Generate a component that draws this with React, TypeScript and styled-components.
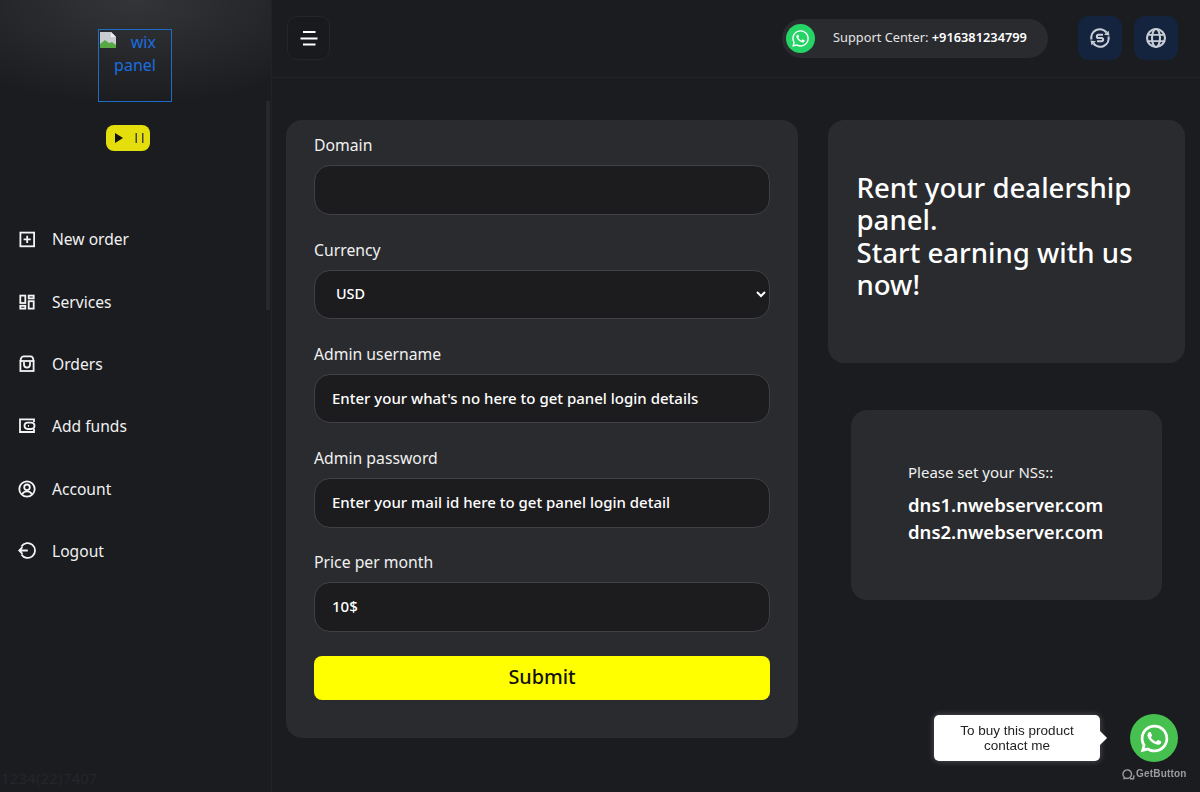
import React from "react";
import styled, { createGlobalStyle } from "styled-components";
import { RiWhatsappLine } from "react-icons/ri";
import { FaWhatsapp } from "react-icons/fa";

const Global = createGlobalStyle`
  html, body { margin: 0; padding: 0; height: 100%; background: #1a1c20; overflow: hidden; }
  * { box-sizing: border-box; }
  body { font-family: "Noto Sans", sans-serif; color: #fff; }
`;

const Page = styled.div`
  display: flex;
  width: 1200px;
  height: 792px;
  overflow: hidden;
  background: #1a1c20;
`;

const Sidebar = styled.aside`
  position: relative;
  width: 272px;
  flex: none;
  display: flex;
  flex-direction: column;
  align-items: stretch;
  border-right: 1px solid #202227;
  background:
    radial-gradient(ellipse 230px 105px at 135px 0, rgba(255,255,255,0.11), rgba(255,255,255,0) 100%),
    #1a1c20;
`;

const ScrollThumb = styled.div`
  position: absolute;
  right: 1px;
  top: 101px;
  width: 4px;
  height: 209px;
  background: #27292d;
`;

const LogoRow = styled.div`
  padding: 29px 0 0 98px;
`;

const LogoBox = styled.div`
  position: relative;
  width: 74px;
  height: 73px;
  border: 1px solid #1c6cc8;
  color: #1a6ee0;
  font-size: 16px;
  line-height: 23px;
  text-align: center;
  padding-top: 1px;
  svg { position: absolute; left: 1px; top: 2px; }
`;

const Toggle = styled.div`
  display: flex;
  align-items: center;
  justify-content: center;
  gap: 11px;
  width: 44px;
  height: 26px;
  margin: 23px 0 0 106px;
  padding-left: 2px;
  background: #e3de0c;
  border-radius: 8px;
`;

const Nav = styled.nav`
  display: flex;
  flex-direction: column;
  margin-top: 57px;
  padding-left: 18px;
`;

const NavItem = styled.a`
  display: flex;
  align-items: center;
  gap: 16px;
  height: 62.4px;
  font-size: 15.6px;
  color: #f1f1f1;
  svg { flex: none; }
`;

const NavIcon = styled.svg`
  width: 18px;
  height: 18px;
  fill: none;
  stroke: #f4f4f4;
  stroke-width: 1.8;
`;

const Ghost = styled.div`
  margin-top: auto;
  padding-bottom: 4px;
  margin-left: 1px;
  font-size: 15px;
  line-height: 19px;
  letter-spacing: 0.15px;
  color: #24262a;
  white-space: nowrap;
`;

const Main = styled.main`
  flex: 1;
  min-width: 0;
  display: flex;
  flex-direction: column;
`;

const Topbar = styled.header`
  height: 78px;
  flex: none;
  display: flex;
  align-items: center;
  padding: 0 22px 2px 15px;
  border-bottom: 1px solid #22242a;
`;

const MenuButton = styled.button`
  width: 43px;
  height: 44px;
  padding: 0;
  display: flex;
  align-items: center;
  justify-content: center;
  background: #191a1d;
  border: 1px solid #24262b;
  border-radius: 10px;
`;

const Support = styled.div`
  margin: 2px 18px 0 auto;
  display: flex;
  align-items: center;
  width: 266px;
  height: 39px;
  padding-left: 4px;
  background: #2a2b2f;
  border-radius: 20px;
  font-size: 12.8px;
  color: #e4e4e4;
  b { font-weight: 600; color: #fff; }
`;

const SupportText = styled.span`
  margin-bottom: 3px;
`;

const GreenDot = styled.span`
  width: 29px;
  height: 29px;
  margin-right: 18px;
  border-radius: 50%;
  background: #25d366;
  display: flex;
  align-items: center;
  justify-content: center;
`;

const SquareButton = styled.div`
  width: 44px;
  height: 44px;
  margin-left: 12px;
  border-radius: 11px;
  background: #14243f;
  display: flex;
  align-items: center;
  justify-content: center;
`;

const TopIcon = styled.svg`
  width: 24px;
  height: 24px;
  fill: none;
  stroke: #c9ced6;
  stroke-width: 2.1;
`;

const Content = styled.div`
  flex: 1;
  display: grid;
  grid-template-columns: 512px 357px;
  column-gap: 30px;
  align-content: start;
  padding: 42px 0 0 14px;
`;

const FormCard = styled.form`
  height: 618px;
  padding: 13.4px 28px 0;
  background: #2a2b2f;
  border-radius: 16px;
`;

const Field = styled.div`
  height: 104.2px;
`;

const Label = styled.label`
  display: block;
  height: 24px;
  margin-bottom: 8px;
  font-size: 15.75px;
  line-height: 24px;
  color: #f1f1f1;
`;

const controlStyles = `
  display: block;
  width: 100%;
  height: 49.6px;
  background: #1c1c1e;
  border: 1px solid #404146;
  border-radius: 16px;
  color: #fff;
  font-family: "Noto Sans", sans-serif;
  font-weight: 500;
  outline: none;
`;

const Input = styled.input`
  ${controlStyles}
  font-size: 15px;
  padding: 0 17px 2px;
`;

const Select = styled.select`
  ${controlStyles}
  font-size: 14.4px;
  padding: 0 4px 2px 17px;
`;

const Submit = styled.button`
  display: block;
  width: 100%;
  height: 44px;
  margin-top: 1.6px;
  padding: 0 0 2px;
  border: none;
  border-radius: 8px;
  background: #ffff00;
  color: #111;
  font-family: "Noto Sans", sans-serif;
  font-size: 19.8px;
  font-weight: 500;
`;

const Side = styled.div`
  display: flex;
  flex-direction: column;
  align-items: center;
`;

const PromoCard = styled.div`
  width: 100%;
  height: 243px;
  padding: 51px 28.5px 0;
  background: #2a2b2f;
  border-radius: 16px;
  font-size: 27.6px;
  line-height: 32.4px;
  font-weight: 500;
  color: #fff;
`;

const NsCard = styled.div`
  width: 311px;
  height: 190px;
  margin-top: 47px;
  padding: 51px 57px 0;
  background: #2a2b2f;
  border-radius: 16px;
`;

const NsHint = styled.div`
  font-size: 15px;
  line-height: 22px;
  margin-bottom: 8px;
  color: #f1f1f1;
`;

const NsName = styled.div`
  font-size: 18.5px;
  line-height: 27px;
  font-weight: 600;
  color: #fff;
`;

const Widget = styled.div`
  position: fixed;
  left: 934px;
  top: 714px;
  width: 256px;
  height: 72px;
`;

const Bubble = styled.div`
  position: absolute;
  left: 0;
  top: 1px;
  width: 166px;
  height: 46px;
  padding-top: 8px;
  background: #fff;
  border-radius: 5px;
  box-shadow: 0 0 6px rgba(255,255,255,0.25);
  color: #222;
  font-family: "Liberation Sans", sans-serif;
  font-size: 13.5px;
  line-height: 15px;
  text-align: center;
  &::after {
    content: "";
    position: absolute;
    right: -5px;
    top: 18px;
    width: 10px;
    height: 10px;
    background: #fff;
    transform: rotate(45deg);
  }
`;

const Round = styled.div`
  position: absolute;
  left: 196px;
  top: 0;
  width: 48px;
  height: 48px;
  border-radius: 50%;
  background: #46c04e;
  display: flex;
  align-items: center;
  justify-content: center;
  color: #fff;
`;

const Brand = styled.div`
  position: absolute;
  left: 188px;
  top: 53px;
  display: flex;
  align-items: center;
  gap: 1px;
  font-family: "Liberation Sans", sans-serif;
  font-size: 10px;
  line-height: 14px;
  font-weight: 700;
  color: #9a9c9f;
  letter-spacing: 0.2px;
`;

const icons: [React.ReactNode, string][] = [
  [<><rect x="2.4" y="2.6" width="13.7" height="13.7" /><path d="M9.2 5.8v7.2M5.6 9.4h7.2" /></>, "New order"],
  [<><rect x="2.3" y="2.6" width="5" height="7.4" /><rect x="2.3" y="12.8" width="5" height="2.8" /><rect x="10.7" y="2.6" width="5" height="2.8" /><rect x="10.7" y="8.2" width="5" height="7.4" /></>, "Services"],
  [<><rect x="2.4" y="6" width="13.2" height="10" /><path d="M2.6 6C2.6 3 4 1.4 5.5 1.4h7C14 1.4 15.4 3 15.4 6M6 7v2.6a3 3 0 0 0 6 0V7" /></>, "Orders"],
  [<><path d="M16 5V2.4H2V15h14v-3" /><rect x="6.5" y="5.6" width="10" height="6.4" rx="3.2" /><path d="M10 8.8h1" /></>, "Add funds"],
  [<><circle cx="9" cy="9" r="7.7" /><circle cx="9" cy="7.3" r="2.8" /><path d="M4.2 14C5.5 12 7 11.4 9 11.4s3.5.6 4.8 2.6" /></>, "Account"],
  [<><path d="M3.4 4.5a7.4 7.4 0 1 1 0 8" /><path d="M1.3 8.5h8.5M4.5 5.2L1.2 8.5l3.3 3.3" /></>, "Logout"],
];

export default function App() {
  return (
    <Page>
      <Global />
      <Sidebar>
        <ScrollThumb />
        <LogoRow>
          <LogoBox>
            <svg width="16" height="16" viewBox="0 0 16 16">
              <path d="M0 0h11l5 5v11H0z" fill="#c9cdd2" />
              <path d="M0 16V12l5-4 4 3 3-1 4 3v3z" fill="#58a845" />
              <path d="M11 0v5h5z" fill="#f0f0f0" />
            </svg>
            &nbsp;&nbsp;&nbsp;&nbsp;wix panel
          </LogoBox>
        </LogoRow>
        <Toggle>
          <svg width="10" height="10" viewBox="0 0 10 10"><path d="M1 0l8 5-8 5z" fill="#111" /></svg>
          <svg width="9" height="10" viewBox="0 0 9 10"><path d="M.5 0H2v10H.5zM7 0h1.5v10H7z" fill="#444" /></svg>
        </Toggle>
        <Nav>
          {icons.map(([icon, label]) => (
            <NavItem key={label}>
              <NavIcon viewBox="0 0 18 18">{icon}</NavIcon>
              {label}
            </NavItem>
          ))}
        </Nav>
        <Ghost>1234(22)7407</Ghost>
      </Sidebar>
      <Main>
        <Topbar>
          <MenuButton aria-label="menu">
            <svg width="18" height="16" viewBox="0 0 18 16">
              <path d="M3 2h12.5M.5 8.5h17M3 14.5h12.5" stroke="#fff" strokeWidth="2" />
            </svg>
          </MenuButton>
          <Support>
            <GreenDot><FaWhatsapp size={19} color="#fff" /></GreenDot>
            <SupportText>Support Center: <b>+916381234799</b></SupportText>
          </Support>
          <SquareButton>
            <TopIcon viewBox="0 0 24 24">
              <path d="M3.5 13.5A8.5 8.5 0 0 1 18.5 6.5M20.5 10.5A8.5 8.5 0 0 1 5.5 17.5" />
              <path d="M21.5 9.5l-5.5-.8 4.500-4zM2.5 14.5l5.500.8-4.500 4z" fill="#c9ced6" stroke="none" />
              <path d="M15 8.8h-4.500a1.600 1.600 0 0 0 0 3.200h3a1.600 1.600 0 0 1 0 3.200H9" />
            </TopIcon>
          </SquareButton>
          <SquareButton>
            <TopIcon viewBox="0 0 24 24">
              <circle cx="12" cy="12" r="9" />
              <ellipse cx="12" cy="12" rx="4" ry="9" />
              <path d="M3.5 8.8h17M3.5 15.2h17" strokeWidth="1.8" />
            </TopIcon>
          </SquareButton>
        </Topbar>
        <Content>
          <FormCard>
            <Field><Label>Domain</Label><Input /></Field>
            <Field>
              <Label>Currency</Label>
              <Select defaultValue="USD"><option>USD</option></Select>
            </Field>
            <Field><Label>Admin username</Label><Input defaultValue="Enter your what's no here to get panel login details" /></Field>
            <Field><Label>Admin password</Label><Input defaultValue="Enter your mail id here to get panel login detail" /></Field>
            <Field><Label>Price per month</Label><Input defaultValue="10$" /></Field>
            <Submit type="button">Submit</Submit>
          </FormCard>
          <Side>
            <PromoCard>
              Rent your dealership panel.<br />Start earning with us now!
            </PromoCard>
            <NsCard>
              <NsHint>Please set your NSs::</NsHint>
              <NsName>dns1.nwebserver.com</NsName>
              <NsName>dns2.nwebserver.com</NsName>
            </NsCard>
          </Side>
        </Content>
      </Main>
      <Widget>
        <Bubble>To buy this product<br />contact me</Bubble>
        <Round><RiWhatsappLine size={33} /></Round>
        <Brand>
          <svg width="13" height="12" viewBox="0 0 13 12" fill="none" stroke="#9a9c9f" strokeWidth="1.4">
            <path d="M2.5 9.500A4.300 4.300 0 1 1 6.500 10.300L2 10.500zM8 10.800h3.500l.5-3.500" />
          </svg>
          GetButton
        </Brand>
      </Widget>
    </Page>
  );
}
